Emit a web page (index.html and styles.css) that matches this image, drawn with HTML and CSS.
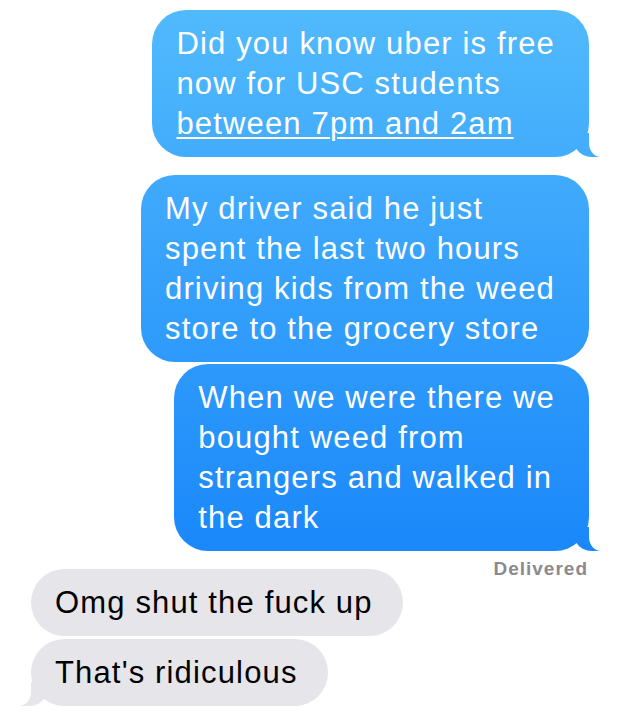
FILE: index.html
```html
<!DOCTYPE html>
<html>
<head>
<meta charset="utf-8">
<link rel="stylesheet" href="styles.css">
</head>
<body>
<div class="thread">
  <div class="bubble sent tail">Did you know uber is free<br>now for USC students<br><span class="link">between 7pm and 2am</span></div>
  <div class="bubble sent group-gap">My driver said he just<br>spent the last two hours<br>driving kids from the weed<br>store to the grocery store</div>
  <div class="bubble sent tail tight">When we were there we<br>bought weed from<br>strangers and walked in<br>the dark</div>
  <div class="status">Delivered</div>
  <div class="bubble recv">Omg shut the fuck up</div>
  <div class="bubble recv tail tight3">That's ridiculous</div>
</div>
</body>
</html>
```

FILE: styles.css
```css
html, body {
  margin: 0;
  padding: 0;
  background: #ffffff;
}
.thread {
  display: flex;
  flex-direction: column;
  padding: 10px 31px 0 31px;
  font-family: "Liberation Sans", Arial, sans-serif;
}
.bubble {
  position: relative;
  font-size: 31px;
  line-height: 40px;
  letter-spacing: 1.15px;
  border-radius: 34px;
  padding: 14px 34px 13px 24px;
  white-space: nowrap;
}
.sent {
  align-self: flex-end;
  color: #ffffff;
  background: linear-gradient(to bottom, #52bbfd 0px, #1785fa 580px);
  background-attachment: fixed;
}
.recv {
  align-self: flex-start;
  color: #000000;
  background: #e5e5ea;
  padding: 14px 30px 13px 24px;
}
.group-gap { margin-top: 18px; }
.tight { margin-top: 2px; }
.tight3 { margin-top: 3px; }
.link {
  text-decoration: underline;
  text-decoration-thickness: 1.5px;
  text-underline-offset: 3px;
}
.sent.tail::before {
  content: "";
  position: absolute;
  bottom: 0;
  right: -11px;
  width: 26px;
  height: 24px;
  background: inherit;
  background-attachment: fixed;
  border-bottom-left-radius: 18px 16px;
}
.sent.tail::after {
  content: "";
  position: absolute;
  bottom: 0;
  right: -16px;
  width: 16px;
  height: 26px;
  background: #ffffff;
  border-bottom-left-radius: 12px 14px;
}
.recv.tail::before {
  content: "";
  position: absolute;
  bottom: 0;
  left: -10px;
  width: 26px;
  height: 24px;
  background: #e5e5ea;
  border-bottom-right-radius: 18px 16px;
}
.recv.tail::after {
  content: "";
  position: absolute;
  bottom: 0;
  left: -16px;
  width: 16px;
  height: 26px;
  background: #ffffff;
  border-bottom-right-radius: 12px 14px;
}
.status {
  align-self: flex-end;
  margin: 7px 1px -11px 0;
  font-size: 19px;
  line-height: 22px;
  font-weight: bold;
  letter-spacing: 1px;
  color: #8a8a8f;
}
```
